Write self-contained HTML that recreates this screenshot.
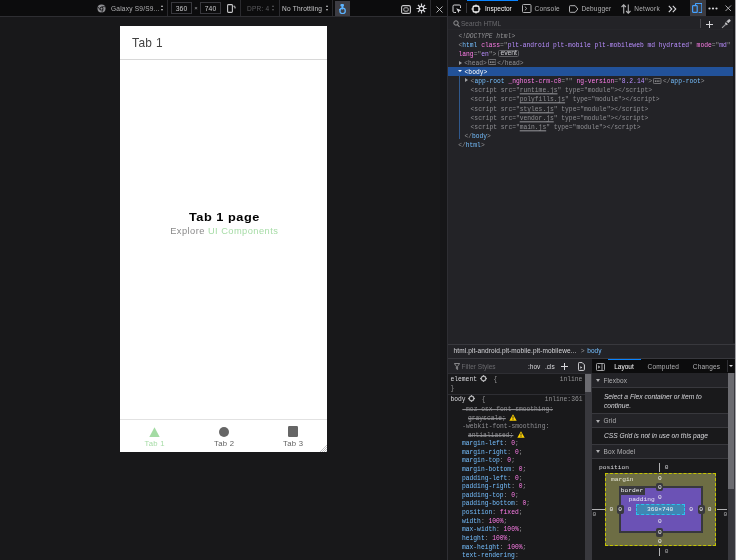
<!DOCTYPE html>
<html><head><meta charset="utf-8">
<style>

*{box-sizing:border-box;margin:0;padding:0}
html,body{width:736px;height:560px;overflow:hidden;background:#18181a;font-family:"Liberation Sans",sans-serif;}
body{will-change:transform}
.abs{position:absolute}
.mono{font-family:"Liberation Mono",monospace}
/* RDM */
#rdmbar{left:0;top:0;width:447px;height:17px;background:#0c0c0d;border-bottom:1px solid #2e2e32}
#rdmview{left:0;top:17px;width:447px;height:543px;background:#18181a}
#phone{left:120px;top:26.3px;width:207px;height:425.5px;background:#fff;overflow:hidden}
/* devtools */
#dtsplit{left:447px;top:0;width:1px;height:560px;background:#2e2e33}
#dt{left:448px;top:0;width:288px;height:560px;background:#232327}
#tabs{left:0;top:0;width:288px;height:17px;background:#0c0c0d;border-bottom:1px solid #26262a}
#search{left:0;top:17px;width:288px;height:13px;background:#232327;border-bottom:1px solid #26262a}
#markup{left:0;top:30px;width:288px;height:315px;background:#232327}
#crumbs{left:0;top:343.5px;width:288px;height:15.5px;background:#232327;border-top:1px solid #38383d;border-bottom:1px solid #38383d}
#rules{left:0;top:359px;width:144px;height:201px;background:#19191b}
#side{left:144px;top:359px;width:144px;height:201px;background:#19191b;border-left:0}
.t{font-size:6.55px;line-height:8px;white-space:nowrap;letter-spacing:0.22px}
.sep{top:0;width:1px;height:16px;background:#2a2a2e}
.inp{top:2px;height:12.3px;border:0.8px solid #38383d;color:#c8c8ca;font-size:6.8px;line-height:11px;text-align:center;letter-spacing:0.1px}
.updown{width:4px;height:6px}
.updown:before{content:"";position:absolute;left:0;top:0;border-left:1.6px solid transparent;border-right:1.6px solid transparent;border-bottom:2px solid #c8c8ca}
.updown:after{content:"";position:absolute;left:0;top:3.6px;border-left:1.6px solid transparent;border-right:1.6px solid transparent;border-top:2px solid #c8c8ca}
.updown.dim:before{border-bottom-color:#5b5b5f}.updown.dim:after{border-top-color:#5b5b5f}
.mrow{position:absolute;font-family:"Liberation Mono",monospace;font-size:6.3px;line-height:9.1px;white-space:pre;color:#b1b1b3;transform:scaleY(1.08);transform-origin:0 3.6px}
.p{color:#939395}.tg{color:#75bfff}.an{color:#ff7de9}.av{color:#b98eff}
.dt{color:#939395;font-style:italic}
.gr,.gr span{color:#8f8f93}
.gr u{text-decoration-thickness:0.6px;text-underline-offset:1px}
.sel{color:#fff}
.badge{display:inline-block;font-family:"Liberation Sans",sans-serif;font-size:6.4px;line-height:5.2px;height:6.2px;padding:0 1.6px;margin-left:1.3px;border:0.7px solid #6b6b70;border-radius:1.5px;color:#c8c8ca;background:#2e2e33;vertical-align:0px}
.dots{display:inline-block;width:7.5px;height:5px;border-radius:1px;margin:0 0.8px;vertical-align:-0.3px;background:radial-gradient(circle,#232327 0.5px,transparent 0.7px) 0.8px 0/1.6px 100% repeat-x,#a8a8ac}
.tw{width:0;height:0;border-top:2.2px solid transparent;border-bottom:2.2px solid transparent;border-left:3.2px solid #a0a0a4}
.tw.dn{border-left:2.2px solid transparent;border-right:2.2px solid transparent;border-top:2.8px solid #fff;border-bottom:0}

.tt{top:3.5px;font-size:6.5px;line-height:8px;white-space:nowrap;color:#b1b1b3}
.it{font-size:6.7px;line-height:8.9px;font-style:italic;color:#d7d7db;white-space:nowrap;letter-spacing:0px}
.bm{width:40px;text-align:center;font-family:"Liberation Mono",monospace;font-size:6.24px;line-height:7.2px;white-space:nowrap}
.bml{font-family:"Liberation Mono",monospace;font-size:6.24px;line-height:7.2px;white-space:nowrap;color:#d7d7db}
.tl{top:413.1px;font-size:7.7px;line-height:9px;letter-spacing:0.3px;white-space:nowrap}
.tb{top:5.2px}
.evb{width:20.4px;height:6.7px;border:0.7px solid #5e5e63;border-radius:1.6px;background:#232327}
.evt{position:absolute;left:0;width:20.4px;text-align:center;color:#d0d0d4;font-size:6.9px;line-height:10px;letter-spacing:-0.1px}

</style></head><body>
<div id="rdmbar" class="abs">
  <svg class="abs" style="left:97.3px;top:3.9px" width="9" height="9" viewBox="0 0 9 9"><circle cx="4.5" cy="4.5" r="4" fill="#8f8f93"/><circle cx="4.5" cy="4.7" r="1.9" fill="#0c0c0d"/><circle cx="4.5" cy="4.7" r="1.1" fill="#8f8f93"/><path d="M4.5 2.7h3.5M2.8 5.7L1.3 3M6.2 5.7L4.6 8.4" stroke="#0c0c0d" stroke-width="0.7"/></svg>
  <div class="abs t" style="left:111px;top:4.6px;color:#b1b1b3">Galaxy S9/S9...</div>
  <div class="abs updown" style="left:161px;top:5px"></div>
  <div class="abs sep" style="left:167px"></div>
  <div class="abs inp" style="left:171px;width:21px">360</div>
  <div class="abs t" style="left:194.2px;top:4.3px;color:#9a9a9e;font-size:6px">×</div>
  <div class="abs inp" style="left:200px;width:21px">740</div>
  <svg class="abs" style="left:226.5px;top:4.3px" width="9" height="9" viewBox="0 0 9 9"><rect x="0.6" y="0.6" width="4.8" height="7.8" rx="0.9" fill="none" stroke="#c8c8ca" stroke-width="1.1"/><path d="M6.3 2.2h1.5v1.6" fill="none" stroke="#c8c8ca" stroke-width="0.9"/><path d="M7 4.3l1.2 -1 1 1z" fill="#c8c8ca"/></svg>
  <div class="abs sep" style="left:240px"></div>
  <div class="abs t" style="left:247px;top:4.6px;color:#5b5b5f">DPR: 4</div>
  <div class="abs updown dim" style="left:272px;top:5px"></div>
  <div class="abs sep" style="left:279px"></div>
  <div class="abs t" style="left:282px;top:4.6px;color:#c8c8ca">No Throttling</div>
  <div class="abs updown" style="left:326px;top:5px"></div>
  <div class="abs sep" style="left:332px"></div>
  <div class="abs" style="left:335px;top:1px;width:15px;height:15px;background:#3d3d44"></div>
  <svg class="abs" style="left:337px;top:3px" width="11" height="11" viewBox="0 0 11 11"><rect x="3.4" y="1" width="3.6" height="2.4" rx="1" fill="#5cb3ff"/><rect x="4.5" y="3" width="1.8" height="3.5" fill="#5cb3ff"/><circle cx="5.6" cy="7.9" r="2.7" fill="none" stroke="#5cb3ff" stroke-width="1.3"/><path d="M2.3 6.2l1.2 0.9" stroke="#5cb3ff" stroke-width="1.1"/></svg>
  <svg class="abs" style="left:401px;top:5px" width="10" height="9" viewBox="0 0 10 9"><rect x="0.6" y="0.6" width="8.8" height="7.8" rx="1.5" fill="none" stroke="#c8c8ca" stroke-width="1.1"/><rect x="2.8" y="2.8" width="4.4" height="3.4" rx="1" fill="none" stroke="#c8c8ca" stroke-width="0.9"/></svg>
  <svg class="abs" style="left:416px;top:3px" width="11" height="11" viewBox="0 0 11 11"><g stroke="#d7d7db" stroke-width="1.2"><path d="M5.5 0.5v10M0.5 5.5h10M2 2l7 7M9 2l-7 7"/></g><circle cx="5.5" cy="5.5" r="2.8" fill="#d7d7db"/><circle cx="5.5" cy="5.5" r="1.6" fill="#0c0c0d"/></svg>
  <div class="abs sep" style="left:430px;top:0;height:16px"></div>
  <svg class="abs" style="left:436px;top:5.6px" width="7" height="7" viewBox="0 0 7 7"><path d="M0.5 0.5l6 6M6.5 0.5l-6 6" stroke="#c8c8ca" stroke-width="0.9"/></svg>
</div>
<div id="rdmview" class="abs"></div>
<div class="abs" style="left:440.3px;top:17px;width:6.7px;height:543px;background:#161618"></div>
<div id="phone" class="abs">
  <div class="abs" style="left:0;top:0;width:207px;height:33.5px;background:#fff;border-bottom:0.8px solid #d8d8d8"></div>
  <div class="abs" style="left:12.1px;top:9.6px;font-size:11.9px;line-height:14px;color:#424242;letter-spacing:0.35px;white-space:nowrap">Tab 1</div>
  <div class="abs" style="left:69px;top:183.7px;font-size:11.3px;line-height:14px;font-weight:bold;color:#000;letter-spacing:0.45px;white-space:nowrap;transform:scaleX(1.13);transform-origin:0 0">Tab 1 page</div>
  <div class="abs" style="left:50.2px;top:199.6px;font-size:9.3px;line-height:11px;color:#8a8a8a;letter-spacing:0.45px;white-space:nowrap">Explore <span style="color:#a6dca6">UI Components</span></div>
  <div class="abs" style="left:0;top:393px;width:207px;height:33px;background:#fff;border-top:0.8px solid #e2e2e2"></div>
  <svg class="abs" style="left:29.4px;top:400.4px" width="11" height="10.4" viewBox="0 0 11 10.4"><path d="M5.5 0.2L10.9 10.4H0.1z" fill="#a3dba3"/></svg>
  <div class="abs" style="left:98.7px;top:400.4px;width:10.3px;height:10.2px;border-radius:50%;background:#666"></div>
  <div class="abs" style="left:167.7px;top:400px;width:10.3px;height:10.8px;border-radius:1.3px;background:#666"></div>
  <div class="abs tl" style="left:24.6px;color:#a6dca6">Tab 1</div>
  <div class="abs tl" style="left:94px;color:#5f5f5f">Tab 2</div>
  <div class="abs tl" style="left:163px;color:#5f5f5f">Tab 3</div>
  <svg class="abs" style="left:199px;top:418px" width="8" height="8" viewBox="0 0 8 8"><path d="M8 1L1 8M8 3L3 8M8 5L5 8M8 7L7 8" stroke="#9a9a9e" stroke-width="0.6"/></svg>
</div>

<div id="dtsplit" class="abs"></div>
<div id="dt" class="abs">
<div id="tabs" class="abs">
  <svg class="abs" style="left:4px;top:4px" width="10" height="10" viewBox="0 0 10 10"><path d="M4 8.5H2.2a1.2 1.2 0 0 1-1.2-1.2V2.2A1.2 1.2 0 0 1 2.2 1h5.1a1.2 1.2 0 0 1 1.2 1.2V4" fill="none" stroke="#d7d7db" stroke-width="1"/><path d="M4.3 4.3l5 1.9-2 0.8-0.8 2z" fill="#d7d7db"/></svg>
  <div class="abs" style="left:18px;top:3px;width:1px;height:10px;background:#38383d"></div>
  <div class="abs" style="left:19px;top:0;width:51px;height:1.3px;background:#0a84ff"></div>
  <svg class="abs" style="left:23.3px;top:3.6px" width="10" height="10" viewBox="0 0 10 10"><rect x="2" y="2" width="6" height="6" rx="1.6" fill="none" stroke="#f9f9fa" stroke-width="1.3"/><path d="M5 0.4v1.6M5 8v1.6M0.4 5h1.6M8 5h1.6" stroke="#f9f9fa" stroke-width="0.9"/></svg>
  <div class="abs tt tb" style="left:37px;color:#f9f9fa">Inspector</div>
  <svg class="abs" style="left:74px;top:4px" width="10" height="9" viewBox="0 0 10 9"><rect x="0.5" y="0.5" width="8.5" height="8" rx="1" fill="none" stroke="#b1b1b3" stroke-width="1"/><path d="M2.8 2.6l2 1.9-2 1.9" fill="none" stroke="#b1b1b3" stroke-width="0.9"/></svg>
  <div class="abs tt tb" style="left:86.6px;letter-spacing:0.2px">Console</div>
  <svg class="abs" style="left:120.5px;top:4.5px" width="10" height="8" viewBox="0 0 10 8"><path d="M1.2 0.7h5l2.6 3.3-2.6 3.3h-5a0.7 0.7 0 0 1-0.7-0.7V1.4a0.7 0.7 0 0 1 0.7-0.7z" fill="none" stroke="#b1b1b3" stroke-width="1"/></svg>
  <div class="abs tt tb" style="left:133.5px;letter-spacing:0.15px">Debugger</div>
  <svg class="abs" style="left:173px;top:3.5px" width="10" height="10" viewBox="0 0 10 10"><path d="M2.7 9.5V0.8M0.5 3l2.2-2.2L4.9 3M7.3 0.5v8.7M5.1 7l2.2 2.2L9.5 7" fill="none" stroke="#b1b1b3" stroke-width="1.1"/></svg>
  <div class="abs tt tb" style="left:186.3px;letter-spacing:0.25px">Network</div>
  <svg class="abs" style="left:220px;top:4.5px" width="9" height="8" viewBox="0 0 9 8"><path d="M0.8 0.8l3 3.2-3 3.2M4.8 0.8l3 3.2-3 3.2" fill="none" stroke="#d7d7db" stroke-width="1.1"/></svg>
  <div class="abs" style="left:242px;top:0;width:15.5px;height:15.5px;background:#3b3b41"></div>
  <svg class="abs" style="left:244.3px;top:3.2px" width="10" height="10" viewBox="0 0 10 10"><path d="M3.5 2.3V1.2a0.7 0.7 0 0 1 0.7-0.7h5a0.7 0.7 0 0 1 0.7 0.7v7.6a0.7 0.7 0 0 1-0.7 0.7H6.6" fill="none" stroke="#45a1ff" stroke-width="1.2"/><rect x="0.6" y="2.6" width="4.6" height="6.8" rx="0.7" fill="none" stroke="#45a1ff" stroke-width="1.2"/></svg>
  <svg class="abs" style="left:260px;top:6.5px" width="10" height="3" viewBox="0 0 10 3"><circle cx="1.5" cy="1.5" r="1.1" fill="#d7d7db"/><circle cx="5" cy="1.5" r="1.1" fill="#d7d7db"/><circle cx="8.5" cy="1.5" r="1.1" fill="#d7d7db"/></svg>
  <svg class="abs" style="left:277px;top:4.8px" width="6.5" height="6.5" viewBox="0 0 6.5 6.5"><path d="M0.5 0.5l5.5 5.5M6 0.5L0.5 6" stroke="#c8c8ca" stroke-width="0.85"/></svg>
</div>
<div id="search" class="abs" style="top:17px">
  <svg class="abs" style="left:5px;top:3.3px" width="7" height="8" viewBox="0 0 7 8"><circle cx="3" cy="3" r="2.2" fill="none" stroke="#939395" stroke-width="1"/><path d="M4.5 4.7l2 2.3" stroke="#939395" stroke-width="1.1"/></svg>
  <div class="abs tt" style="left:13px;top:3.4px;color:#6a6a6e">Search HTML</div>
  <div class="abs" style="left:252px;top:2.3px;width:1px;height:9px;background:#4a4a4f"></div>
  <svg class="abs" style="left:258px;top:3.6px" width="7" height="7" viewBox="0 0 7 7"><path d="M3.5 0v7M0 3.5h7" stroke="#d7d7db" stroke-width="1"/></svg>
  <svg class="abs" style="left:272.5px;top:2.3px" width="10" height="10" viewBox="0 0 10 10"><path d="M1.2 8.8L5.6 4.4" stroke="#a8a8ac" stroke-width="1.5" stroke-dasharray="1 0.5"/><path d="M4.3 3.7l2 2" stroke="#c8c8ca" stroke-width="1.4"/><path d="M6 2.4l1.6-1.6a1 1 0 0 1 1.4 1.4L7.4 3.8z" fill="#c8c8ca" stroke="#c8c8ca" stroke-width="0.8"/></svg>
</div>

<div id="markup" class="abs"><div class="abs" style="left:0;top:36.90px;width:288px;height:9.1px;background:#22529a"></div><div class="abs" style="left:11px;top:46px;width:1px;height:63.2px;background:#30588c"></div><div class="mrow " style="top:2.00px;left:10.50px"><span class="dt">&lt;!DOCTYPE html&gt;</span></div><div class="mrow " style="top:10.90px;left:10.50px"><span class="p">&lt;</span><span class="tg">html</span> <span class="an">class</span><span class="p">="</span><span class="av">plt-android plt-mobile plt-mobileweb md hydrated</span><span class="p">"</span> <span class="an">mode</span><span class="p">="</span><span class="av">md</span><span class="p">"</span></div><div class="mrow " style="top:19.50px;left:10.50px"><span class="an">lang</span><span class="p">="</span><span class="av">en</span><span class="p">"</span><span class="p">&gt;</span></div><div class="mrow gr" style="top:28.70px;left:16.20px"><span class="p">&lt;head&gt;</span><span style="display:inline-block;width:10.3px"></span><span class="p">&lt;/head&gt;</span></div><div class="mrow gr" style="top:56.30px;left:22.60px">&lt;script src="<u>runtime.js</u>" type="module"&gt;&lt;/script&gt;</div><div class="mrow gr" style="top:65.47px;left:22.60px">&lt;script src="<u>polyfills.js</u>" type="module"&gt;&lt;/script&gt;</div><div class="mrow gr" style="top:74.64px;left:22.60px">&lt;script src="<u>styles.js</u>" type="module"&gt;&lt;/script&gt;</div><div class="mrow gr" style="top:83.81px;left:22.60px">&lt;script src="<u>vendor.js</u>" type="module"&gt;&lt;/script&gt;</div><div class="mrow gr" style="top:92.98px;left:22.60px">&lt;script src="<u>main.js</u>" type="module"&gt;&lt;/script&gt;</div><div class="mrow " style="top:47.20px;left:22.60px"><span class="p">&lt;</span><span class="tg">app-root</span> <span class="an">_nghost-crm-c0</span><span class="p">="</span><span class="av"></span><span class="p">"</span> <span class="an">ng-version</span><span class="p">="</span><span class="av">8.2.14</span><span class="p">"</span><span class="p">&gt;</span><span style="display:inline-block;width:11px"></span><span class="p">&lt;/</span><span class="tg">app-root</span><span class="p">&gt;</span></div><div class="mrow " style="top:102.20px;left:16.40px"><span class="p">&lt;/</span><span class="tg">body</span><span class="p">&gt;</span></div><div class="mrow " style="top:111.30px;left:10.20px"><span class="p">&lt;/</span><span class="tg">html</span><span class="p">&gt;</span></div><div class="mrow sel" style="top:38.00px;left:16.60px">&lt;body&gt;</div><div class="abs tw" style="left:10.90px;top:30.60px"></div><div class="abs tw dn" style="left:9.90px;top:40.30px"></div><div class="abs tw" style="left:16.80px;top:48.40px"></div><div class="abs evb" style="left:50.40px;top:19.90px"></div><div class="abs evt" style="left:50.40px;top:17.90px">event</div><svg class="abs" style="left:39.80px;top:29.20px" width="8.4" height="6" viewBox="0 0 8.4 6"><rect x="0.4" y="0.4" width="7.6" height="5.2" rx="1" fill="#232327" stroke="#909094" stroke-width="0.8"/><rect x="1.9" y="2.6" width="1.2" height="1" fill="#c8c8ca"/><rect x="3.6" y="2.6" width="1.2" height="1" fill="#c8c8ca"/><rect x="5.3" y="2.6" width="1.2" height="1" fill="#c8c8ca"/></svg><svg class="abs" style="left:205.40px;top:48.30px" width="8.4" height="6" viewBox="0 0 8.4 6"><rect x="0.4" y="0.4" width="7.6" height="5.2" rx="1" fill="#232327" stroke="#909094" stroke-width="0.8"/><rect x="1.9" y="2.6" width="1.2" height="1" fill="#c8c8ca"/><rect x="3.6" y="2.6" width="1.2" height="1" fill="#c8c8ca"/><rect x="5.3" y="2.6" width="1.2" height="1" fill="#c8c8ca"/></svg></div>
<div id="crumbs" class="abs">
<div class="abs tt" style="left:5.60px;top:2.90px;color:#d7d7db;letter-spacing:0.1px">html.plt-android.plt-mobile.plt-mobilewe...</div>
<div class="abs tt" style="left:132.80px;top:2.90px;color:#939395">&gt;</div>
<div class="abs tt" style="left:139.30px;top:2.90px;color:#75bfff">body</div>
</div>
<div id="rules" class="abs">
<div class="abs" style="left:0;top:0;width:144px;height:14.5px;background:#232327;border-bottom:1px solid #2e2e33"></div>
<svg class="abs" style="left:5.60px;top:3.80px" width="6" height="7" viewBox="0 0 6 7"><path d="M0.3 0.5h5.4L3.6 3.3v3.2L2.4 5.8V3.3z" fill="none" stroke="#939395" stroke-width="0.9"/></svg>
<div class="abs tt" style="left:13.60px;top:3.70px;color:#6a6a6e">Filter Styles</div>
<div class="abs tt" style="left:80.00px;top:3.70px;color:#d7d7db">:hov</div>
<div class="abs tt" style="left:97.00px;top:3.70px;color:#d7d7db">.cls</div>
<svg class="abs" style="left:113.30px;top:3.80px" width="7" height="7" viewBox="0 0 7 7"><path d="M3.5 0v7M0 3.5h7" stroke="#d7d7db" stroke-width="1"/></svg>
<svg class="abs" style="left:129.50px;top:3.00px" width="7" height="9" viewBox="0 0 7 9"><path d="M1.2 0.6h3l2.2 2.2v4.8a0.8 0.8 0 0 1-0.8 0.8H1.2a0.8 0.8 0 0 1-0.8-0.8V1.4a0.8 0.8 0 0 1 0.8-0.8z" fill="none" stroke="#d7d7db" stroke-width="1"/><path d="M2.3 4.2l2 1.3-2 1.3z" fill="#d7d7db"/></svg>
<div class="mrow " style="top:15.60px;left:2.50px"><span style="color:#d7d7db">element</span></div>
<svg class="abs" style="left:32.30px;top:16.10px" width="7" height="7" viewBox="0 0 7 7"><circle cx="3.5" cy="3.5" r="2.3" fill="none" stroke="#b1b1b3" stroke-width="1.3"/><path d="M3.5 0v1.4M3.5 5.6V7M0 3.5h1.4M5.6 3.5H7" stroke="#b1b1b3" stroke-width="1"/></svg>
<div class="mrow " style="top:15.60px;left:45.50px"><span class="p">{</span></div>
<div class="mrow " style="top:15.60px;left:111.70px"><span class="p">inline</span></div>
<div class="mrow " style="top:25.00px;left:2.50px"><span class="p">}</span></div>
<div class="abs" style="left:0;top:35px;width:137px;height:1px;background:#2e2e33"></div>
<div class="mrow " style="top:35.60px;left:2.50px"><span style="color:#d7d7db">body</span></div>
<svg class="abs" style="left:20.00px;top:36.10px" width="7" height="7" viewBox="0 0 7 7"><circle cx="3.5" cy="3.5" r="2.3" fill="none" stroke="#b1b1b3" stroke-width="1.3"/><path d="M3.5 0v1.4M3.5 5.6V7M0 3.5h1.4M5.6 3.5H7" stroke="#b1b1b3" stroke-width="1"/></svg>
<div class="mrow " style="top:35.60px;left:33.80px"><span class="p">{</span></div>
<div class="mrow " style="top:35.60px;left:96.70px"><span class="p">inline:361</span></div>
<div class="mrow gr" style="top:45.80px;left:14.30px"><s>-moz-osx-font-smoothing:</s></div>
<div class="mrow gr" style="top:54.70px;left:20.00px"><s>grayscale;</s></div>
<div class="mrow gr" style="top:63.30px;left:14.30px">-webkit-font-smoothing:</div>
<div class="mrow gr" style="top:71.80px;left:20.00px"><s>antialiased;</s></div>
<svg class="abs" style="left:61.00px;top:54.80px" width="8" height="7" viewBox="0 0 8 7"><path d="M4 0.3L7.7 6.7H0.3z" fill="#ffd300"/><path d="M4 2.2v2.4M4 5.3v0.8" stroke="#1c1b22" stroke-width="0.9"/></svg>
<svg class="abs" style="left:68.60px;top:72.00px" width="8" height="7" viewBox="0 0 8 7"><path d="M4 0.3L7.7 6.7H0.3z" fill="#ffd300"/><path d="M4 2.2v2.4M4 5.3v0.8" stroke="#1c1b22" stroke-width="0.9"/></svg>
<div class="mrow " style="top:80.00px;left:14.00px"><span class="tg">margin-left</span><span class="p">: </span><span class="an">0</span><span class="p">;</span></div>
<div class="mrow " style="top:88.64px;left:14.00px"><span class="tg">margin-right</span><span class="p">: </span><span class="an">0</span><span class="p">;</span></div>
<div class="mrow " style="top:97.28px;left:14.00px"><span class="tg">margin-top</span><span class="p">: </span><span class="an">0</span><span class="p">;</span></div>
<div class="mrow " style="top:105.92px;left:14.00px"><span class="tg">margin-bottom</span><span class="p">: </span><span class="an">0</span><span class="p">;</span></div>
<div class="mrow " style="top:114.56px;left:14.00px"><span class="tg">padding-left</span><span class="p">: </span><span class="an">0</span><span class="p">;</span></div>
<div class="mrow " style="top:123.20px;left:14.00px"><span class="tg">padding-right</span><span class="p">: </span><span class="an">0</span><span class="p">;</span></div>
<div class="mrow " style="top:131.84px;left:14.00px"><span class="tg">padding-top</span><span class="p">: </span><span class="an">0</span><span class="p">;</span></div>
<div class="mrow " style="top:140.48px;left:14.00px"><span class="tg">padding-bottom</span><span class="p">: </span><span class="an">0</span><span class="p">;</span></div>
<div class="mrow " style="top:149.12px;left:14.00px"><span class="tg">position</span><span class="p">: </span><span class="an">fixed</span><span class="p">;</span></div>
<div class="mrow " style="top:157.76px;left:14.00px"><span class="tg">width</span><span class="p">: </span><span class="an">100%</span><span class="p">;</span></div>
<div class="mrow " style="top:166.40px;left:14.00px"><span class="tg">max-width</span><span class="p">: </span><span class="an">100%</span><span class="p">;</span></div>
<div class="mrow " style="top:175.04px;left:14.00px"><span class="tg">height</span><span class="p">: </span><span class="an">100%</span><span class="p">;</span></div>
<div class="mrow " style="top:183.68px;left:14.00px"><span class="tg">max-height</span><span class="p">: </span><span class="an">100%</span><span class="p">;</span></div>
<div class="mrow " style="top:192.32px;left:14.00px"><span class="tg">text-rendering</span><span class="p">:</span></div>
<div class="abs" style="left:136.5px;top:14.5px;width:7px;height:186.5px;background:#38383d"></div>
<div class="abs" style="left:137px;top:14.5px;width:6px;height:18.5px;background:#6b6b70"></div>
</div>
<div id="side" class="abs">
<div class="abs" style="left:0;top:0;width:144px;height:14px;background:#0c0c0d"></div>
<div class="abs" style="left:15.90px;top:0;width:33.3px;height:1.2px;background:#0a84ff"></div>
<svg class="abs" style="left:3.60px;top:3.50px" width="9" height="8" viewBox="0 0 9 8"><rect x="0.5" y="0.5" width="8" height="7" rx="0.8" fill="none" stroke="#b1b1b3" stroke-width="0.9"/><path d="M6 0.5v7" stroke="#b1b1b3" stroke-width="0.9"/><path d="M2.2 2.3l2 1.7-2 1.7z" fill="#b1b1b3"/></svg>
<div class="abs tt" style="left:22.20px;top:4.40px;color:#f9f9fa">Layout</div>
<div class="abs tt" style="left:55.50px;top:4.40px;letter-spacing:0.2px">Computed</div>
<div class="abs tt" style="left:100.80px;top:4.40px;letter-spacing:0.2px">Changes</div>
<div class="abs" style="left:134.50px;top:1px;width:1px;height:12px;background:#2e2e33"></div>
<div class="abs" style="left:137.30px;top:6.30px;width:0;height:0;border-left:2.4px solid transparent;border-right:2.4px solid transparent;border-top:2.8px solid #d7d7db"></div>
<div class="abs" style="left:0;top:14px;width:136px;height:15px;background:#232327;border-bottom:1px solid #38383d"></div>
<div class="abs" style="left:4.20px;top:20.40px;width:0;height:0;border-left:2.7px solid transparent;border-right:2.7px solid transparent;border-top:3.2px solid #b1b1b3"></div>
<div class="abs tt" style="left:11.40px;top:18.10px;letter-spacing:0.15px">Flexbox</div>
<div class="abs it" style="left:11.90px;top:33.60px">Select a Flex container or item to<br>continue.</div>
<div class="abs" style="left:0;top:54px;width:136px;height:1px;background:#38383d"></div>
<div class="abs" style="left:0;top:55px;width:136px;height:14px;background:#232327;border-bottom:1px solid #38383d"></div>
<div class="abs" style="left:4.20px;top:60.50px;width:0;height:0;border-left:2.7px solid transparent;border-right:2.7px solid transparent;border-top:3.2px solid #b1b1b3"></div>
<div class="abs tt" style="left:11.40px;top:58.20px;letter-spacing:0.15px">Grid</div>
<div class="abs it" style="left:11.90px;top:73.40px">CSS Grid is not in use on this page</div>
<div class="abs" style="left:0;top:85px;width:136px;height:1px;background:#38383d"></div>
<div class="abs" style="left:0;top:86px;width:136px;height:14px;background:#232327;border-bottom:1px solid #38383d"></div>
<div class="abs" style="left:4.20px;top:91.40px;width:0;height:0;border-left:2.7px solid transparent;border-right:2.7px solid transparent;border-top:3.2px solid #b1b1b3"></div>
<div class="abs tt" style="left:11.40px;top:89.10px;letter-spacing:0.15px">Box Model</div>
<div class="abs bml" style="left:7px;top:104.80px">position</div>
<div class="abs" style="left:67.20px;top:104px;width:0.8px;height:9px;background:#b1b1b3"></div>
<div class="abs bm" style="left:54.50px;top:104.80px;color:#d7d7db">0</div>
<div class="abs" style="left:13px;top:114.20px;width:111px;height:73.3px;background:#6d6d44;border:0.6px dashed #c4c400"></div>
<div class="abs bml" style="left:19px;top:117.00px;color:#e8e8d8">margin</div>
<div class="abs" style="left:26.50px;top:127px;width:84px;height:46.6px;background:#6b52b5;border:2px solid #38383d"></div>
<div class="abs" style="left:28px;top:128.50px;width:25px;height:7px;background:#38383d"></div>
<div class="abs bml" style="left:28.80px;top:128.00px;color:#f0f0f4">border</div>
<div class="abs bml" style="left:36.60px;top:137.40px;color:#e8e4f8">padding</div>
<div class="abs" style="left:43.60px;top:144.90px;width:49.3px;height:11.5px;background:#3f86b3;border:0.7px dashed #2ac3f0"></div>
<div class="abs bm" style="left:48.20px;top:147.00px;color:#f0f0f4">360×740</div>
<div class="abs" style="left:-0.30px;top:150.20px;width:12.9px;height:0.8px;background:#b1b1b3"></div>
<div class="abs" style="left:125px;top:150.20px;width:10px;height:0.8px;background:#b1b1b3"></div>
<div class="abs" style="left:67.20px;top:189.20px;width:0.8px;height:7.5px;background:#b1b1b3"></div>
<div class="abs" style="left:64.30px;top:123.90px;width:7px;height:8.4px;border-radius:2px;background:#38383d"></div>
<div class="abs" style="left:64.30px;top:169.40px;width:7px;height:8.4px;border-radius:2px;background:#38383d"></div>
<div class="abs" style="left:24.50px;top:146.40px;width:7px;height:8.4px;border-radius:2px;background:#38383d"></div>
<div class="abs" style="left:105.50px;top:146.40px;width:7px;height:8.4px;border-radius:2px;background:#38383d"></div>
<div class="abs bm" style="left:47.80px;top:115.50px;color:#f0f0f4">0</div>
<div class="abs bm" style="left:47.80px;top:124.50px;color:#f0f0f4">0</div>
<div class="abs bm" style="left:47.80px;top:134.80px;color:#f0f0f4">0</div>
<div class="abs bm" style="left:47.80px;top:158.80px;color:#f0f0f4">0</div>
<div class="abs bm" style="left:47.80px;top:170.00px;color:#f0f0f4">0</div>
<div class="abs bm" style="left:47.80px;top:178.70px;color:#f0f0f4">0</div>
<div class="abs bm" style="left:-0.60px;top:147.00px;color:#f0f0f4">0</div>
<div class="abs bm" style="left:8.00px;top:147.00px;color:#f0f0f4">0</div>
<div class="abs bm" style="left:17.60px;top:147.00px;color:#f0f0f4">0</div>
<div class="abs bm" style="left:79.10px;top:147.00px;color:#f0f0f4">0</div>
<div class="abs bm" style="left:89.00px;top:147.00px;color:#f0f0f4">0</div>
<div class="abs bm" style="left:97.60px;top:147.00px;color:#f0f0f4">0</div>
<div class="abs bm" style="left:-17.70px;top:152.40px;color:#b1b1b3">0</div>
<div class="abs bm" style="left:113.40px;top:152.40px;color:#b1b1b3">0</div>
<div class="abs bm" style="left:54.50px;top:189.30px;color:#b1b1b3">0</div>
<div class="abs" style="left:136px;top:14px;width:7px;height:187px;background:#38383d"></div>
<div class="abs" style="left:136.30px;top:14px;width:6px;height:116.30px;background:#6b6b70"></div>
</div>
<div id="rstrip" class="abs" style="left:285.4px;top:16px;width:1.4px;height:327px;background:#19191c"></div><div class="abs" style="left:286.8px;top:0;width:1.2px;height:560px;background:#a4a4a8"></div>
</div>
</body></html>
